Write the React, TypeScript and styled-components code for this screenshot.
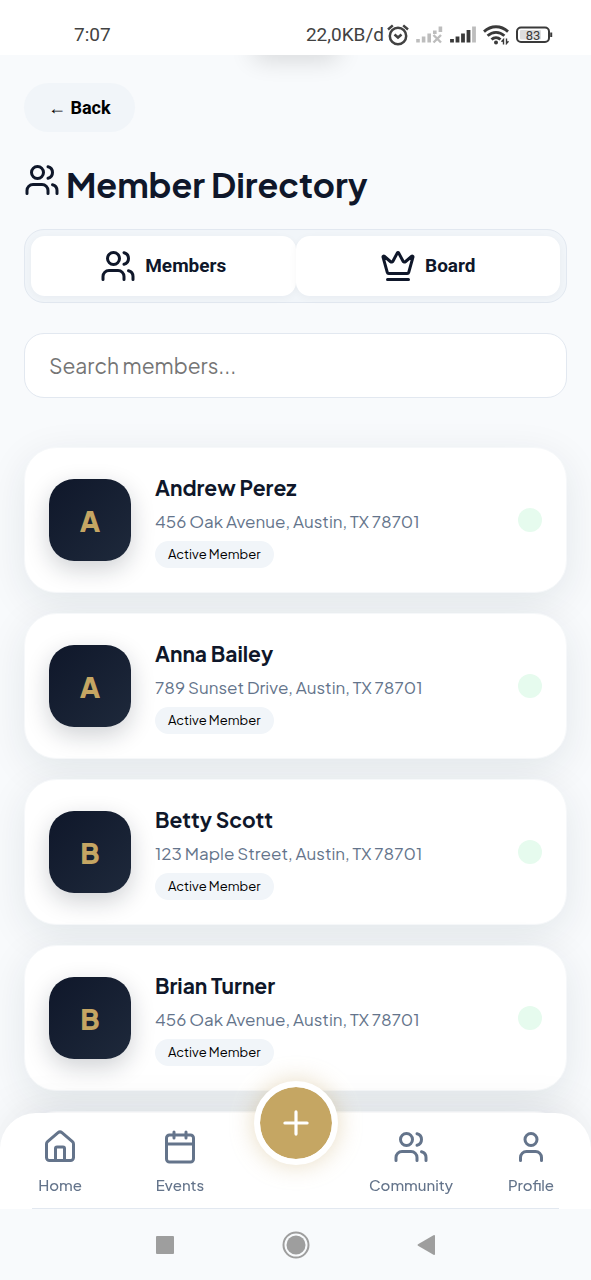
import React from "react";
import styled, { createGlobalStyle } from "styled-components";
import { Calendar, Crown, House, Plus, User, Users } from "lucide-react";

const navy = "#0f172a";
const slate = "#64748b";
const line = "#e2e8f0";
const mist = "#f1f5f9";
const page = "#f8fafc";
const gold = "#c5a663";
const brandFont = `"Plus Jakarta Sans", Inter, "Noto Sans", sans-serif`;
const systemFont = `Roboto, "Noto Sans", sans-serif`;

const GlobalStyle = createGlobalStyle`
  *, *::before, *::after { box-sizing: border-box; }
  body {
    margin: 0;
    background: ${page};
    color: ${navy};
    font-family: ${brandFont};
  }
  button, input { font: inherit; color: inherit; }
`;

const Screen = styled.div`
  display: flex;
  flex-direction: column;
  height: 100vh;
  overflow: hidden;
`;

const StatusBar = styled.header`
  display: flex;
  align-items: center;
  justify-content: space-between;
  flex: none;
  height: 55px;
  padding: 14px 38px 0 74px;
  background: #fff;
  color: #424242;
  font: 400 19px/24px ${systemFont};
`;

const StatusGroup = styled.div<{ $gap: number }>`
  display: flex;
  align-items: center;
  gap: ${(p) => p.$gap}px;
`;

const Viewport = styled.div`
  position: relative;
  flex: 1;
  min-height: 0;
  overflow: hidden;
`;

const NotchShadow = styled.div`
  position: absolute;
  left: 50%;
  top: -20px;
  width: 88px;
  height: 20px;
  margin-left: -44px;
  border-radius: 10px;
  box-shadow: 0 4px 24px rgba(0, 0, 0, 0.16);
`;

const Content = styled.main`
  display: flex;
  flex-direction: column;
  align-items: stretch;
  padding: 28px 24px 0;
`;

const BackButton = styled.button`
  align-self: flex-start;
  height: 49px;
  padding: 0 24px;
  border: 0;
  border-radius: 25px;
  background: ${mist};
  color: #000;
  font: 700 18px/24px ${systemFont};
`;

const Title = styled.h1`
  display: flex;
  align-items: flex-start;
  gap: 6px;
  margin: 30px 0 22px;
  font-size: 34px;
  font-weight: 700;
  line-height: 45px;
  white-space: nowrap;
`;

const Tabs = styled.div`
  display: flex;
  padding: 6px;
  border: 1px solid ${line};
  border-radius: 20px;
  background: ${mist};
`;

const Tab = styled.button`
  display: flex;
  flex: 1;
  align-items: center;
  justify-content: center;
  gap: 9px;
  height: 60px;
  border: 0;
  border-radius: 14px;
  background: #fff;
  box-shadow: 0 2px 8px rgba(15, 23, 42, 0.04);
  font: 700 19px/24px ${systemFont};
`;

const Search = styled.input`
  width: 100%;
  height: 65px;
  margin: 30px 0 49px;
  padding: 0 24px;
  border: 1px solid ${line};
  border-radius: 20px;
  background: #fff;
  font-size: 21px;
  outline: none;
  &::placeholder { color: #757575; opacity: 1; }
`;

const MemberList = styled.ul`
  display: flex;
  flex-direction: column;
  gap: 20px;
  margin: 0;
  padding: 0;
  list-style: none;
`;

const MemberCard = styled.li`
  display: flex;
  align-items: center;
  gap: 24px;
  min-height: 146px;
  padding: 0 24px;
  border: 1px solid #f6f8fa;
  border-radius: 32px;
  background: #fff;
  box-shadow: 0 10px 40px rgba(15, 42, 52, 0.09);
`;

const Avatar = styled.div`
  display: grid;
  place-items: center;
  flex: none;
  width: 82px;
  height: 82px;
  border-radius: 25px;
  background: linear-gradient(135deg, ${navy}, #1e293b);
  box-shadow: 0 8px 24px rgba(15, 23, 42, 0.2);
  color: ${gold};
  font-size: 28px;
  font-weight: 800;
`;

const Details = styled.div`
  flex: 1;
  min-width: 0;
  padding-top: 2px;
`;

const Name = styled.h2`
  margin: 0 0 7px;
  font-size: 21px;
  font-weight: 700;
  line-height: 28px;
`;

const Address = styled.p`
  margin: 0 0 8px;
  color: ${slate};
  font-size: 17px;
  line-height: 24px;
`;

const Badge = styled.span`
  display: block;
  width: fit-content;
  padding: 0 13px;
  border-radius: 14px;
  background: ${mist};
  color: #000;
  font-size: 13px;
  line-height: 27px;
`;

const StatusDot = styled.span`
  flex: none;
  width: 24px;
  height: 24px;
  border-radius: 50%;
  background: #e6fbee;
`;

const BottomArea = styled.footer`
  position: fixed;
  inset: auto 0 0;
`;

const NavBar = styled.nav`
  display: grid;
  grid-template-columns: 1fr 1fr 111px 1fr 1fr;
  height: 96px;
  border-radius: 36px 36px 0 0;
  background: #fff;
  box-shadow: 0 -10px 40px rgba(15, 23, 42, 0.05);
`;

const NavLink = styled.a`
  display: flex;
  flex-direction: column;
  align-items: center;
  gap: 10px;
  padding-top: 16px;
  color: ${slate};
  font-size: 15px;
  font-weight: 500;
  line-height: 20px;
  text-decoration: none;
`;

const AddButton = styled.button`
  display: grid;
  place-items: center;
  justify-self: center;
  width: 84px;
  height: 84px;
  margin-top: -32px;
  padding: 0;
  border: 6px solid #fff;
  border-radius: 50%;
  background: ${gold};
  background-clip: padding-box;
  box-shadow: 0 0 24px rgba(197, 166, 99, 0.4);
  color: #fff;
`;

const SystemBar = styled.div`
  display: grid;
  grid-template-columns: repeat(3, 131px);
  justify-content: center;
  place-items: center;
  height: 71px;
  background: ${page};
`;

const SystemRule = styled.hr`
  height: 1px;
  margin: -1px 32px 0;
  border: 0;
  background: ${line};
`;

const AlarmIcon = () => (
  <svg width="22" height="22" viewBox="0 0 22 22" fill="none" stroke="#424242" strokeWidth="2.500">
    <circle cx="11" cy="12" r="8.200" />
    <path d="M7.5 10.5 11 13.5l3.500-3M1 5.500 5.800 1.400M21 5.500l-4.800-4.100" />
  </svg>
);

const WeakSignalIcon = () => (
  <svg width="28" height="18" viewBox="0 0 28 18" fill="none" stroke="#bdbdbd" strokeWidth="3.600" strokeLinejoin="round">
    <path d="M3 16.500v-3.500M8.600 16.500v-6M14.200 16.500V7.500M19.800 8V4.500M25.400 6V.5" />
    <path strokeWidth="2.400" d="m18.500 9 7.500 7.500m0-7.500-7.500 7.500" />
  </svg>
);

const SignalIcon = () => (
  <svg width="28" height="18" viewBox="0 0 28 18" fill="none" stroke="#3a3a3a" strokeWidth="3.800">
    <path d="M3 16.500v-3.500M8.500 16.500v-6M14 16.500V7.500M19.500 16.500V4" />
    <path stroke="#bdbdbd" d="M25 16.500V.5" />
  </svg>
);

const WifiIcon = () => (
  <svg width="26" height="20" viewBox="0 0 26 20" fill="none" stroke="#3a3a3a" strokeWidth="2.800">
    <path d="M1 6.600C8 .1 18 .1 25 6.600M4.600 10.800c5-4.600 11.800-4.600 16.800 0M8.500 14.600c2.600-2.500 6.400-2.500 9 0" />
    <circle cx="13" cy="17.500" r="2" fill="#3a3a3a" stroke="none" />
    <path strokeWidth="1.400" d="M20.500 19.500v-5l-2 2.200M23.500 13.500v5l2-2.200" />
  </svg>
);

const BatteryIcon = () => (
  <svg width="38" height="18" viewBox="0 0 38 18">
    <rect x="2" y="1.500" width="32" height="14.500" rx="4" fill="#fff" stroke="#3a3a3a" strokeWidth="2" />
    <rect x="5" y="4" width="21" height="9.500" rx="1" fill="#dedede" />
    <path d="M36.200 6.500v4.500" stroke="#3a3a3a" strokeWidth="2" />
    <text x="18" y="13.500" textAnchor="middle" fontFamily="Roboto, sans-serif" fontSize="13" fontWeight="400" fill="#3a3a3a">83</text>
  </svg>
);

const members = [
  { name: "Andrew Perez", address: "456 Oak Avenue, Austin, TX 78701" },
  { name: "Anna Bailey", address: "789 Sunset Drive, Austin, TX 78701" },
  { name: "Betty Scott", address: "123 Maple Street, Austin, TX 78701" },
  { name: "Brian Turner", address: "456 Oak Avenue, Austin, TX 78701" },
];

export default function App() {
  return (
    <Screen>
      <GlobalStyle />
      <StatusBar>
        <span>7:07</span>
        <StatusGroup $gap={3}>
          <span>22,0KB/d</span>
          <StatusGroup $gap={6}>
            <AlarmIcon />
            <WeakSignalIcon />
            <SignalIcon />
            <WifiIcon />
            <BatteryIcon />
          </StatusGroup>
        </StatusGroup>
      </StatusBar>
      <Viewport>
        <NotchShadow />
        <Content>
          <BackButton type="button">← Back</BackButton>
          <Title>
            <Users size={36} />
            Member Directory
          </Title>
          <Tabs>
            <Tab type="button"><Users size={36} />Members</Tab>
            <Tab type="button"><Crown size={36} />Board</Tab>
          </Tabs>
          <Search type="search" aria-label="Search members" placeholder="Search members..." />
          <MemberList>
            {members.map((member) => (
              <MemberCard key={member.name}>
                <Avatar>{member.name[0]}</Avatar>
                <Details>
                  <Name>{member.name}</Name>
                  <Address>{member.address}</Address>
                  <Badge>Active Member</Badge>
                </Details>
                <StatusDot />
              </MemberCard>
            ))}
            <MemberCard aria-hidden="true" />
          </MemberList>
        </Content>
      </Viewport>
      <BottomArea>
        <NavBar>
          <NavLink href="#home"><House size={36} />Home</NavLink>
          <NavLink href="#events"><Calendar size={36} />Events</NavLink>
          <AddButton type="button" aria-label="Add"><Plus size={38} strokeWidth={2} /></AddButton>
          <NavLink href="#community"><Users size={36} />Community</NavLink>
          <NavLink href="#profile"><User size={36} />Profile</NavLink>
        </NavBar>
        <SystemRule />
        <SystemBar>
          <svg width="28" height="28" viewBox="0 0 28 28"><rect x="5" y="5" width="18" height="18" rx="1" fill="#9e9e9e" /></svg>
          <svg width="28" height="28" viewBox="0 0 28 28"><circle cx="14" cy="14" r="12.500" fill="none" stroke="#9e9e9e" strokeWidth="2" /><circle cx="14" cy="14" r="9.500" fill="#9e9e9e" /></svg>
          <svg width="28" height="28" viewBox="0 0 28 28"><path d="M22 5v18a1 1 0 0 1-1.500.8L5 14.800a1 1 0 0 1 0-1.600l15.500-9A1 1 0 0 1 22 5Z" fill="#9e9e9e" /></svg>
        </SystemBar>
      </BottomArea>
    </Screen>
  );
}
